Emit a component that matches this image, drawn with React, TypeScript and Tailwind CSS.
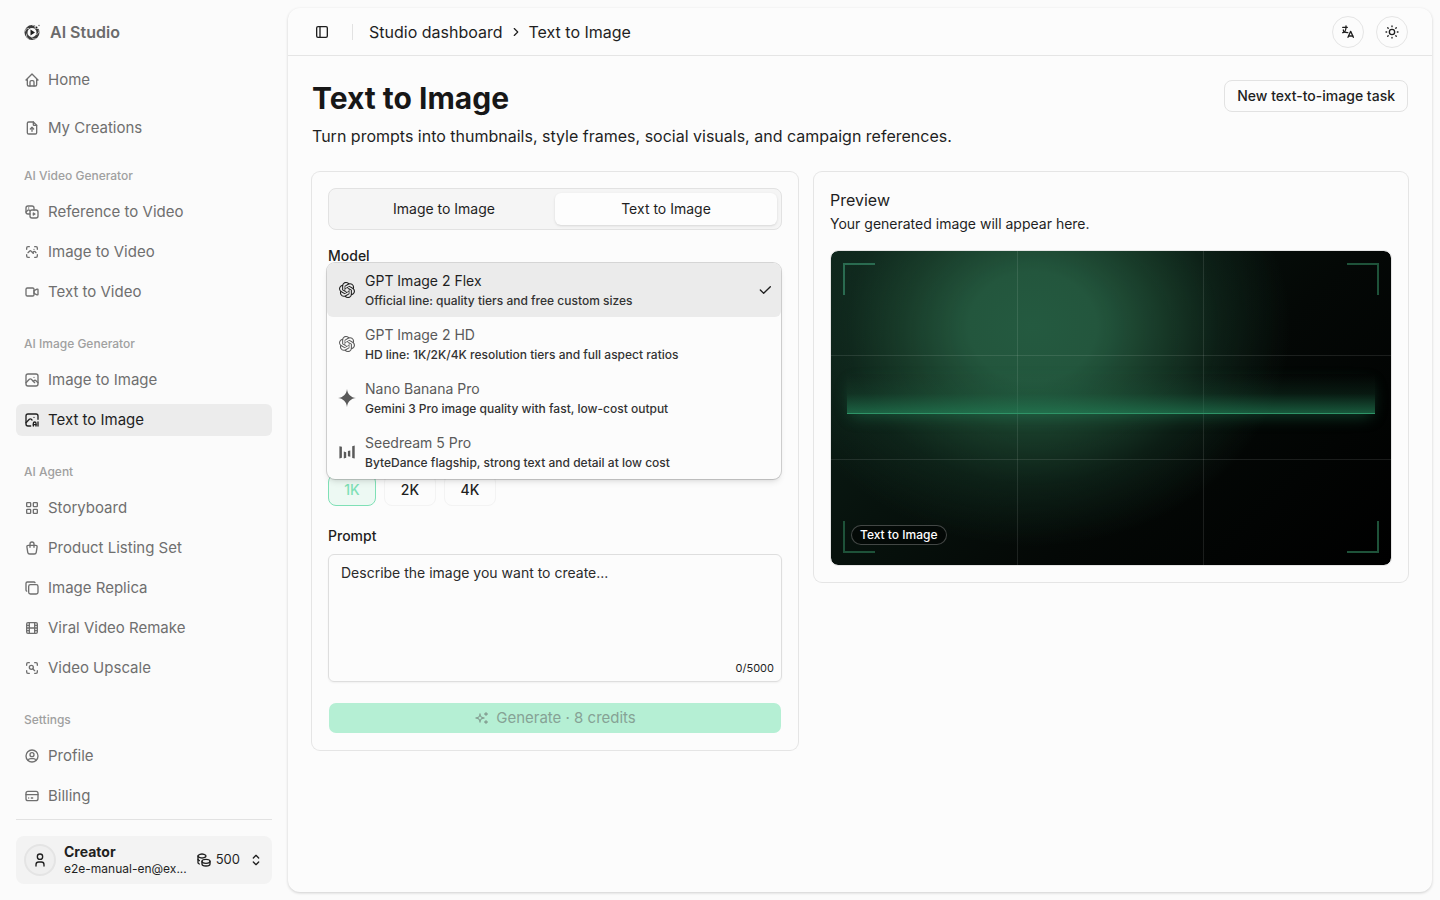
import type { ComponentType } from "react";
import {
  TbCheck,
  TbChevronRight,
  TbCoins,
  TbCopy,
  TbCreditCard,
  TbFileUpload,
  TbHome,
  TbLanguage,
  TbLayoutGrid,
  TbLayoutSidebar,
  TbMovie,
  TbPhoto,
  TbPhotoAi,
  TbPhotoScan,
  TbPhotoVideo,
  TbSelector,
  TbShoppingBag,
  TbSparkles,
  TbSun,
  TbUser,
  TbUserCircle,
  TbVideo,
  TbZoomScan,
} from "react-icons/tb";
import { RiGeminiFill } from "react-icons/ri";
import { SiOpenai } from "react-icons/si";

type Icon = ComponentType<{ className?: string }>;
type NavEntry = { label: string; icon: Icon; active?: boolean };

const mainNav: NavEntry[] = [
  { label: "Home", icon: TbHome },
  { label: "My Creations", icon: TbFileUpload },
];

const navGroups: { title: string; items: NavEntry[] }[] = [
  {
    title: "AI Video Generator",
    items: [
      { label: "Reference to Video", icon: TbPhotoVideo },
      { label: "Image to Video", icon: TbPhotoScan },
      { label: "Text to Video", icon: TbVideo },
    ],
  },
  {
    title: "AI Image Generator",
    items: [
      { label: "Image to Image", icon: TbPhoto },
      { label: "Text to Image", icon: TbPhotoAi, active: true },
    ],
  },
  {
    title: "AI Agent",
    items: [
      { label: "Storyboard", icon: TbLayoutGrid },
      { label: "Product Listing Set", icon: TbShoppingBag },
      { label: "Image Replica", icon: TbCopy },
      { label: "Viral Video Remake", icon: TbMovie },
      { label: "Video Upscale", icon: TbZoomScan },
    ],
  },
  {
    title: "Settings",
    items: [
      { label: "Profile", icon: TbUserCircle },
      { label: "Billing", icon: TbCreditCard },
    ],
  },
];

function BarsIcon({ className }: { className?: string }) {
  return (
    <svg viewBox="0 0 16 16" fill="currentColor" className={className} aria-hidden="true">
      <path d="M.4 2.200l2.500.6v11l-2.500.6zM4.800 7.600l2.400.6v5.600l-2.400.6zM8.900 7l2.400-.6v6.400L8.900 12.200zM13.200 2.200l2.500-.6v13l-2.500-.6z" />
    </svg>
  );
}

function StudioLogo() {
  return (
    <svg viewBox="0 0 32 32" className="size-4" fill="none" aria-hidden="true">
      <circle cx="16" cy="17" r="12" stroke="#3a3a3a" strokeWidth="6" />
      <path
        d="M16 2c5 .5 7 4 6 8M30 12c1 5-2 8-6 9M25 29c-4 2-8 1-10-3M9 30c-4-3-5-7-3-11M2 15c1-5 4-7 8-6"
        stroke="#d9d9d9"
        strokeWidth="1.6"
      />
      <path d="M13 11l9 6-9 6z" fill="#1c1c1c" />
      <circle cx="26" cy="6" r="4" fill="#fcfcfc" />
      <circle cx="25" cy="7" r="2" fill="#1c1c1c" />
      <circle cx="30" cy="3" r="1.3" fill="#555" />
    </svg>
  );
}

const models: { name: string; detail: string; icon: Icon; iconClass: string; selected?: boolean }[] = [
  {
    name: "GPT Image 2 Flex",
    detail: "Official line: quality tiers and free custom sizes",
    icon: SiOpenai,
    iconClass: "size-4 shrink-0",
    selected: true,
  },
  {
    name: "GPT Image 2 HD",
    detail: "HD line: 1K/2K/4K resolution tiers and full aspect ratios",
    icon: SiOpenai,
    iconClass: "size-4 shrink-0",
  },
  {
    name: "Nano Banana Pro",
    detail: "Gemini 3 Pro image quality with fast, low-cost output",
    icon: RiGeminiFill,
    iconClass: "size-[18px] shrink-0",
  },
  {
    name: "Seedream 5 Pro",
    detail: "ByteDance flagship, strong text and detail at low cost",
    icon: BarsIcon,
    iconClass: "size-4 shrink-0",
  },
];

function NavLink({ item }: { item: NavEntry }) {
  const Glyph = item.icon;
  return (
    <a
      href="#"
      aria-current={item.active ? "page" : undefined}
      className={
        item.active
          ? "flex h-8 items-center gap-2 rounded-md bg-[#ececec] px-2 text-[15px] text-[#1f1f1f]"
          : "flex h-8 items-center gap-2 rounded-md px-2 text-[15px] text-[#6f6f6f]"
      }
    >
      <Glyph className="size-4 shrink-0" />
      {item.label}
    </a>
  );
}

function Sidebar() {
  return (
    <aside className="flex w-72 shrink-0 flex-col px-4">
      <a href="#" className="flex h-16 shrink-0 items-center gap-2.5 px-2 font-semibold text-[#6b6b6b]">
        <StudioLogo />
        AI Studio
      </a>
      <nav className="flex min-h-0 flex-1 flex-col overflow-hidden">
        <div className="flex flex-col gap-4">
          {mainNav.map((item) => (
            <NavLink key={item.label} item={item} />
          ))}
        </div>
        <div className="mt-4 flex flex-col gap-5">
          {navGroups.map((group) => (
            <section key={group.title}>
              <h2 className="mb-1 flex h-8 items-center px-2 text-xs font-medium text-[#a0a0a0]">{group.title}</h2>
              <div className="flex flex-col gap-2">
                {group.items.map((item) => (
                  <NavLink key={item.label} item={item} />
                ))}
              </div>
            </section>
          ))}
        </div>
      </nav>
      <div className="shrink-0 border-t border-[#e2e2e2] py-4">
        <button type="button" className="flex h-12 w-full items-center gap-2 rounded-lg bg-[#f3f3f3] px-2 text-left text-[#1f1f1f]">
          <span className="flex size-8 shrink-0 items-center justify-center rounded-full border-2 border-[#e4e4e4] bg-[#efefef]">
            <TbUser className="size-4" />
          </span>
          <span className="flex flex-1 flex-col whitespace-nowrap">
            <span className="text-sm leading-[18px] font-bold">Creator</span>
            <span className="text-xs">e2e-manual-en@ex...</span>
          </span>
          <span className="flex items-center gap-1 text-[13px]">
            <TbCoins className="size-4" />
            500
          </span>
          <TbSelector className="size-4 shrink-0" />
        </button>
      </div>
    </aside>
  );
}

function TopBar() {
  return (
    <header className="flex h-12 shrink-0 items-center border-b border-[#e5e5e5] px-6">
      <button type="button" aria-label="Toggle sidebar" className="flex size-5 items-center justify-center">
        <TbLayoutSidebar className="size-4" />
      </button>
      <span className="ml-5 h-4 w-px bg-[#e2e2e2]" />
      <nav aria-label="Breadcrumb" className="ml-4 flex items-center gap-1.5">
        <a href="#">Studio dashboard</a>
        <TbChevronRight className="size-3.5" />
        <span>Text to Image</span>
      </nav>
      <div className="ml-auto flex gap-3">
        <button
          type="button"
          aria-label="Language"
          className="flex size-8 items-center justify-center rounded-full border border-[#e5e5e5]"
        >
          <TbLanguage className="size-4" />
        </button>
        <button
          type="button"
          aria-label="Theme"
          className="flex size-8 items-center justify-center rounded-full border border-[#e5e5e5]"
        >
          <TbSun className="size-4" />
        </button>
      </div>
    </header>
  );
}

function ModelMenu() {
  return (
    <div
      role="listbox"
      aria-label="Model"
      className="absolute -top-[3px] right-px -left-px z-10 overflow-hidden rounded-lg bg-[#fcfcfc] shadow-md ring-1 ring-black/15"
    >
      {models.map((model) => {
        const Glyph = model.icon;
        return (
          <button
            type="button"
            key={model.name}
            role="option"
            aria-selected={model.selected ?? false}
            className={
              model.selected
                ? "flex h-[54px] w-full items-center gap-2.5 rounded-md bg-[#ebebeb] pr-2 pl-3 text-left text-[#1f1f1f]"
                : "flex h-[54px] w-full items-center gap-2.5 pr-2 pl-3 text-left text-[#5a5a5a]"
            }
          >
            <span className="flex size-4 shrink-0 items-center justify-center">
              <Glyph className={model.iconClass} />
            </span>
            <span className="flex flex-1 flex-col gap-0.5">
              <span className="text-sm">{model.name}</span>
              <span className="text-xs font-medium text-[#333333]">{model.detail}</span>
            </span>
            {model.selected && <TbCheck className="size-4" />}
          </button>
        );
      })}
    </div>
  );
}

function GeneratorForm() {
  return (
    <form className="flex flex-col rounded-lg p-4 text-sm ring-1 ring-[#e5e5e5]">
      <div role="tablist" className="grid h-[42px] grid-cols-2 rounded-lg border border-[#e2e2e2] bg-[#f5f5f5] p-1">
        <button type="button" role="tab" aria-selected="false" className="rounded-md">
          Image to Image
        </button>
        <button type="button" role="tab" aria-selected="true" className="rounded-md bg-[#fdfdfd] shadow-sm">
          Text to Image
        </button>
      </div>
      <h2 className="mt-4 font-medium">Model</h2>
      <div className="relative h-52">
        <ModelMenu />
      </div>
      <div className="flex gap-2 font-medium">
        <button type="button" className="h-8 w-12 rounded-lg border border-[#7fe0b6] bg-[#edf9f3] text-[#7fe0b6]">
          1K
        </button>
        <button type="button" className="h-8 w-13 rounded-lg border border-[#f3f3f3]">
          2K
        </button>
        <button type="button" className="h-8 w-13 rounded-lg border border-[#f3f3f3]">
          4K
        </button>
      </div>
      <label htmlFor="prompt" className="mt-5 font-medium">
        Prompt
      </label>
      <div className="relative mt-2 flex">
        <textarea
          id="prompt"
          placeholder="Describe the image you want to create..."
          className="h-32 w-full resize-none rounded-md border border-[#dedede] bg-transparent px-3 py-2 shadow-xs placeholder:text-[#2b2b2b]"
        />
        <span className="absolute right-2 bottom-1.5 text-[11px] leading-4">0/5000</span>
      </div>
      <button
        type="button"
        disabled
        className="mt-5 flex h-8 items-center justify-center gap-1.5 rounded-lg border border-transparent bg-[#b5efd4] bg-clip-padding text-[15px] text-[#86a295]"
      >
        <TbSparkles className="size-4" />
        Generate · 8 credits
      </button>
    </form>
  );
}

function PreviewArt() {
  return (
    <div className="relative mt-4 aspect-video overflow-hidden rounded-lg border border-[#e5e5e5] bg-[radial-gradient(ellipse_46%_70%_at_36%_24%,#245a40_0%,#23563d_25%,#1c442fcc_50%,#14332480_72%,transparent_100%),linear-gradient(135deg,#0d221a_0%,#07120d_35%,#040806_60%,#000000_100%)] bg-clip-padding">
      <div className="absolute inset-0 grid grid-cols-3 divide-x divide-white/10">
        <span />
        <span />
        <span />
      </div>
      <div className="absolute inset-0 grid grid-rows-3 divide-y divide-white/10">
        <span />
        <span />
        <span />
      </div>
      <div className="absolute inset-x-4 top-[39%] h-10 border-b border-[#2f9468] bg-linear-to-b from-transparent via-[#1f6a47]/20 to-[#24855a]/65 shadow-[0_6px_16px_-4px_rgba(36,133,90,0.45)]" />
      <span className="absolute top-3 left-3 size-8 border-t-2 border-l-2 border-[#2a6b50]" />
      <span className="absolute top-3 right-3 size-8 border-t-2 border-r-2 border-[#1e5239]" />
      <span className="absolute bottom-3 left-3 size-8 border-b-2 border-l-2 border-[#1e5239]" />
      <span className="absolute right-3 bottom-3 size-8 border-r-2 border-b-2 border-[#1e5239]" />
      <span className="absolute bottom-5 left-5 flex h-5 items-center rounded-full border border-white/25 bg-black/40 px-2 text-xs font-medium text-white">
        Text to Image
      </span>
    </div>
  );
}

export default function App() {
  return (
    <div className="flex h-screen bg-[#fbfbfb] font-['Inter','Liberation_Sans',sans-serif] text-[#1f1f1f]">
      <Sidebar />
      <main className="my-2 mr-2 flex min-w-0 flex-1 flex-col rounded-xl bg-[#fcfcfc] shadow-[0_1px_3px_rgba(0,0,0,0.18)]">
        <TopBar />
        <div className="flex-1 p-6">
          <div className="flex items-start justify-between">
            <div>
              <h1 className="text-3xl leading-9 font-bold text-[#171717]">Text to Image</h1>
              <p className="mt-2">Turn prompts into thumbnails, style frames, social visuals, and campaign references.</p>
            </div>
            <button type="button" className="h-8 rounded-lg border border-[#e2e2e2] px-3 text-sm font-medium">
              New text-to-image task
            </button>
          </div>
          <div className="mt-6 grid grid-cols-[0.9fr_1.1fr] items-start gap-4">
            <GeneratorForm />
            <section className="rounded-lg p-4 ring-1 ring-[#e5e5e5]">
              <h2>Preview</h2>
              <p className="mt-0.5 text-sm">Your generated image will appear here.</p>
              <PreviewArt />
            </section>
          </div>
        </div>
      </main>
    </div>
  );
}
